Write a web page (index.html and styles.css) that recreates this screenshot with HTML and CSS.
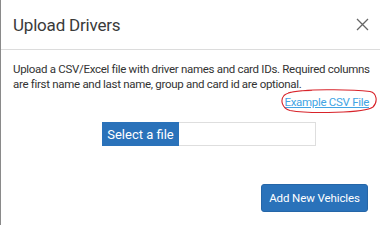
FILE: index.html
```html
<!DOCTYPE html>
<html>
<head>
<meta charset="utf-8">
<link rel="stylesheet" href="styles.css">
</head>
<body>
<div class="modal">
  <div class="modal-header">
    <h4 class="modal-title">Upload Drivers</h4>
    <button class="close" aria-label="Close">
      <svg width="13" height="13" viewBox="0 0 13 13"><path d="M1 1L12 12M12 1L1 12" stroke="#666" stroke-width="1.3" fill="none"/></svg>
    </button>
  </div>
  <div class="modal-body">
    <p class="desc">Upload a CSV/Excel file with driver names and card IDs. Required columns are first name and last name, group and card id are optional.</p>
    <div class="link-row">
      <span class="link-wrap">
        <a class="example-link" href="#">Example CSV File</a>
        <svg class="circle" width="98" height="25" viewBox="0 0 98 25"><path d="M8 4 C 22 0, 70 0, 90 2.5 C 97 4, 98 13, 93 18 C 85 24, 30 25, 10 21.5 C 2 19.5, 0 11, 4 6.5 C 8 2.5, 20 1.5, 32 1.5" stroke="#d8232a" stroke-width="1.1" fill="none"/></svg>
      </span>
    </div>
    <div class="file-row">
      <span class="file-btn">Select a file</span>
      <span class="file-name"></span>
    </div>
  </div>
  <div class="modal-footer">
    <button class="btn-primary">Add New Vehicles</button>
  </div>
</div>
</body>
</html>
```
FILE: styles.css
```css
html, body {
  margin: 0;
  padding: 0;
  background: #fff;
}
body {
  font-family: Roboto, "Liberation Sans", sans-serif;
  color: #333;
}
.modal {
  width: 380px;
  height: 225px;
  box-sizing: border-box;
  border-left: 1px solid #8a8a8a;
  display: flex;
  flex-direction: column;
}
.modal-header {
  height: 50px;
  flex-shrink: 0;
  box-sizing: border-box;
  border-bottom: 1px solid #dcdcdc;
  display: flex;
  align-items: center;
  justify-content: space-between;
  padding: 0 11px 0 12px;
}
.modal-title {
  margin: 0;
  font-size: 17px;
  letter-spacing: -0.2px;
  font-weight: 400;
  color: #3a3a3a;
}
.close {
  border: 0;
  background: none;
  padding: 0;
  display: flex;
  width: 13px;
  height: 13px;
  align-items: center;
  justify-content: center;
}
.modal-body {
  padding: 12px 11px 0 12px;
}
.desc {
  margin: 0 -8px 0 0;
  font-size: 11.5px;
  letter-spacing: -0.3px;
  line-height: 15px;
  color: #333;
}
.link-row {
  display: flex;
  justify-content: flex-end;
  margin-top: 1px;
}
.link-wrap {
  position: relative;
  display: inline-block;
  line-height: 15px;
}
.example-link {
  font-size: 11.5px;
  letter-spacing: -0.3px;
  white-space: nowrap;
  color: #42a4e4;
  text-decoration: underline;
}
.circle {
  position: absolute;
  left: -4px;
  top: -4px;
  pointer-events: none;
}
.file-row {
  display: flex;
  margin: 12px 0 0 89px;
  height: 24px;
}
.file-btn {
  background: #2a72ba;
  color: #fff;
  font-size: 13px;
  white-space: nowrap;
  display: flex;
  align-items: center;
  justify-content: center;
  width: 77px;
  box-sizing: border-box;
}
.file-name {
  width: 137px;
  box-sizing: border-box;
  border: 1px solid #dedede;
  border-left: 0;
}
.modal-footer {
  display: flex;
  justify-content: flex-end;
  padding: 38px 12px 0 0;
}
.btn-primary {
  font-family: Roboto, "Liberation Sans", sans-serif;
  background: #2a72ba;
  color: #fff;
  border: 1px solid #2566a8;
  border-radius: 3px;
  font-size: 11.5px;
  letter-spacing: -0.1px;
  height: 28px;
  width: 107px;
  padding: 0;
}
```
